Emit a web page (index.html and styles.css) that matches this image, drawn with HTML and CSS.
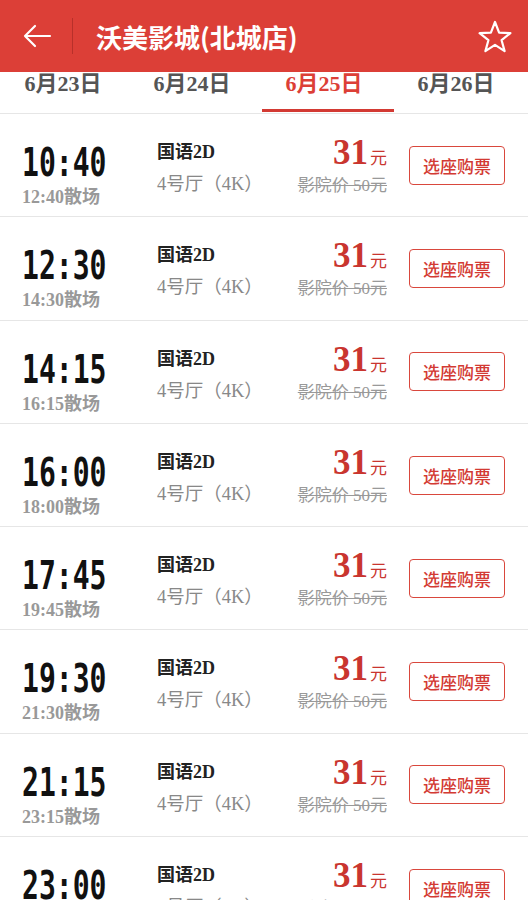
FILE: index.html
```html
<!DOCTYPE html>
<html lang="zh-CN">
<head>
  <meta charset="UTF-8" />
  <title>沃美影城(北城店)</title>
  <link rel="stylesheet" href="styles.css">
</head>
<body>

  <div class="top-bar">
    <span class="back">
      <svg width="30" height="24" viewBox="0 0 30 24"><path d="M28 12H3M13 2L3 12l10 10" fill="none" stroke="#fff" stroke-width="2.2" stroke-linecap="round" stroke-linejoin="round"/></svg>
    </span>
    <span class="divider"></span>
    <h2>沃美影城(北城店)</h2>
    <span class="fav">
      <svg width="36" height="34" viewBox="0 0 36 34"><path d="M18 2l4.1 10.6 11.3.5-8.8 7.1 3 10.9L18 24.9l-9.6 6.2 3-10.9-8.8-7.1 11.3-.5z" fill="none" stroke="#fff" stroke-width="2.2" stroke-linejoin="round"/></svg>
    </span>
  </div>

  <div class="date-tabs">
    <div class="tab">6月23日</div>
    <div class="tab">6月24日</div>
    <div class="tab active">6月25日</div>
    <div class="tab">6月26日</div>
  </div>

  <div id="showList"></div>

  <script>
    const shows = [
      ["10:40", "12:40"],
      ["12:30", "14:30"],
      ["14:15", "16:15"],
      ["16:00", "18:00"],
      ["17:45", "19:45"],
      ["19:30", "21:30"],
      ["21:15", "23:15"],
      ["23:00", "01:00"]
    ];

    const list = document.getElementById("showList");
    shows.forEach(s => {
      const row = document.createElement("div");
      row.className = "show";
      row.innerHTML = `
        <div class="show-time">
          <div class="start">${s[0]}</div>
          <div class="end">${s[1]}散场</div>
        </div>
        <div class="show-info">
          <div class="lang">国语2D</div>
          <div class="hall">4号厅（4K）</div>
        </div>
        <div class="show-price">
          <div class="now"><b>31</b>元</div>
          <div class="old">影院价 50元</div>
        </div>
        <button class="buy-btn">选座购票</button>
      `;
      list.appendChild(row);
    });
  </script>
</body>
</html>
```

FILE: styles.css
```css
body {
  margin: 0;
  background: #fff;
  font-family: "Liberation Serif", "Noto Sans CJK SC", serif;
  color: #222;
  overflow: hidden;
}

.top-bar {
  height: 72px;
  background: #dc3f37;
  display: flex;
  align-items: center;
  color: #fff;
}

.top-bar .back {
  display: flex;
  margin-left: 22px;
  margin-right: 20px;
}

.top-bar .divider {
  width: 1px;
  height: 36px;
  background: #b8302a;
}

.top-bar h2 {
  margin: 0 0 0 23px;
  font-family: "Noto Sans CJK SC", sans-serif;
  font-size: 26px;
  font-weight: 700;
  flex: 1;
}

.top-bar .fav {
  display: flex;
  margin-right: 15px;
  margin-top: 2px;
}

.date-tabs {
  display: flex;
  height: 41px;
  border-bottom: 1px solid #e6e6e6;
  padding-left: 0;
}

.tab {
  width: 132px;
  flex: none;
  text-align: center;
  font-size: 22px;
  font-weight: 700;
  color: #555;
  line-height: 24px;
  position: relative;
}

.tab:first-child {
  width: 126px;
}

.tab.active {
  color: #dc3f37;
}

.tab.active::after {
  content: "";
  position: absolute;
  left: 4px;
  right: -4px;
  top: 37px;
  height: 3px;
  background: #d33a33;
}

.show {
  display: flex;
  align-items: center;
  height: 103.3px;
  box-sizing: border-box;
  border-bottom: 1px solid #e6e6e6;
  padding: 0 23px 0 22px;
}

.show-time {
  width: 135px;
  align-self: flex-start;
  padding-top: 28px;
}

.show-time .start {
  font-family: "DejaVu Sans Mono", monospace;
  font-weight: 700;
  font-size: 39px;
  line-height: 42px;
  color: #111;
  transform: scaleX(0.72);
  transform-origin: left center;
  white-space: nowrap;
}

.show-time .end {
  font-size: 18px;
  font-weight: 700;
  color: #999;
  margin-top: -2px;
}

.show-info {
  flex: 1;
  align-self: flex-start;
  padding-top: 25px;
}

.show-info .lang {
  font-size: 18px;
  font-weight: 700;
  color: #222;
  line-height: 26px;
}

.show-info .hall {
  font-size: 18.5px;
  color: #888;
  margin-top: 6px;
  line-height: 26px;
}

.show-price {
  text-align: right;
  align-self: flex-start;
  padding-top: 22px;
  margin-right: 22px;
}

.show-price .now {
  color: #c9352f;
  font-size: 17px;
  line-height: 34px;
}

.show-price .now b {
  font-size: 35px;
  margin-right: 2px;
}

.show-price .old {
  font-size: 17px;
  color: #999;
  text-decoration: line-through;
  line-height: 20px;
}

.buy-btn {
  width: 96px;
  height: 39px;
  background: #fff;
  border: 1.5px solid #d9473d;
  border-radius: 4px;
  color: #d33a33;
  font-family: "Noto Sans CJK SC", sans-serif;
  font-size: 17px;
  font-weight: 500;
  padding: 0;
}
```
